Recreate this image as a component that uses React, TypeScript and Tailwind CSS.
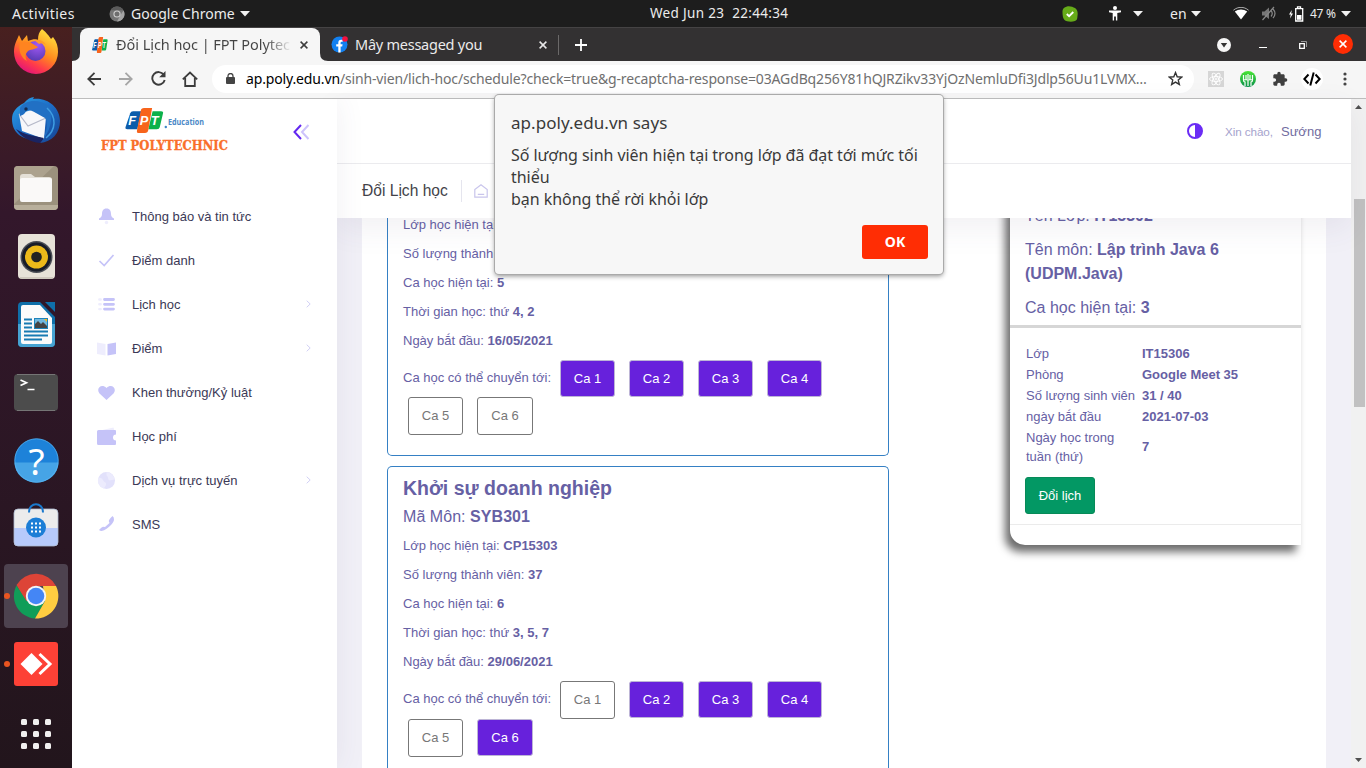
import React from 'react';

const UI = "font-['Noto_Sans','Open_Sans',sans-serif]";

const Caret = ({ className = '' }: { className?: string }) => (
  <svg className={className} width="10" height="6" viewBox="0 0 10 6"><path d="M0 0h10L5 5.500z" fill="#f2f2f2" /></svg>
);

function TopBar() {
  return (
    <header className={`flex h-[27px] shrink-0 items-center bg-[#1d1d1d] text-[14px] text-[#ececec] ${UI}`}>
      <span className="ml-3 w-[97px] whitespace-nowrap tracking-[0.45px]">Activities</span>
      <svg width="16" height="16" viewBox="0 0 16 16">
        <circle cx="8" cy="8" r="7.500" fill="#767676" />
        <path d="M1.500 4.200A7.500 7.500 0 0 1 14.500 4.200H8z" fill="#5b5b5b" />
        <path d="M14.600 4.400A7.500 7.500 0 0 1 8 15.500L11.500 9z" fill="#a4a4a4" />
        <circle cx="8" cy="8" r="3.600" fill="#d0d0d0" /><circle cx="8" cy="8" r="2.500" fill="#6e6e6e" />
      </svg>
      <span className="ml-[6px] w-[109px] whitespace-nowrap tracking-[0.03px]">Google Chrome</span>
      <Caret />
      <span className="ml-[400px] w-[410px] whitespace-pre text-[13.500px] tracking-[0.340px]">Wed Jun 23  22:44:34</span>
      <svg className="ml-[2px]" width="16" height="16" viewBox="0 0 16 16">
        <path d="M5 .4C8-.3 11 1 13 2s3 4 2.600 7 0 5-2.600 6-5 1-8 .3S.8 12 .6 8.500 0 1.500 5 .4z" fill="#66ab19" />
        <path d="M4.800 8l2.300 2.200L11.300 6" fill="none" stroke="#fff" strokeWidth="1.800" />
      </svg>
      <svg className="ml-[31px]" width="12" height="15" viewBox="0 0 12 15">
        <circle cx="6" cy="2" r="2" fill="#fff" />
        <path d="M0 4.500h12v1.700L8.300 7v7.500H6.900V10.500H5.100v4H3.700V7L0 6.200z" fill="#fff" />
      </svg>
      <Caret className="ml-[12px]" />
      <span className="ml-[27px] w-[21px]">en</span>
      <Caret />
      <svg className="ml-[32px]" width="16" height="13" viewBox="0 0 16 13">
        <path d="M.4 3.200C5-.6 11-.6 15.600 3.200" fill="none" stroke="#aaa" strokeWidth="1" />
        <path d="M1.800 4.600C5.500 1.800 10.500 1.800 14.200 4.600L8 12.500z" fill="#fff" />
      </svg>
      <svg className="ml-[12px]" width="16" height="15" viewBox="0 0 16 15" fill="none" stroke="#888">
        <path d="M1 5.500h2.500L8 1.500v11.500L3.500 9.500H1z" fill="#777" stroke="none" />
        <path d="M10 4.500q2.500 3 0 6M12 3q4 4.500 0 9M1.500 14L13 1" strokeWidth="1.200" />
      </svg>
      <svg className="ml-[12px]" width="15" height="16" viewBox="0 0 15 16">
        <path d="M2.800 4L0 8.500h1.800L1 12.500 4 7.500H2.200z" fill="#fff" />
        <path d="M8.500 2.200V.8h3v1.400M6.700 2.700h7v12.300h-7z" fill="none" stroke="#fff" strokeWidth="1.300" />
        <path d="M8 9h4.500v4.800H8z" fill="#fff" />
      </svg>
      <span className="ml-[6px] w-[31px] whitespace-nowrap text-[12px] tracking-[-0.3px]">47 %</span>
      <Caret />
    </header>
  );
}

const dockIcons: React.ReactNode[] = [
  <svg className="relative -top-px" width="46" height="46" viewBox="0 0 46 46">
    <defs>
      <linearGradient id="ff" x1=".8" y1=".1" x2=".3" y2="1"><stop offset="0" stopColor="#ffd93b" /><stop offset=".45" stopColor="#ff8a1e" /><stop offset=".75" stopColor="#ff3a4b" /><stop offset="1" stopColor="#e0127c" /></linearGradient>
      <radialGradient id="fp" cx=".6" cy=".2" r=".8"><stop offset="0" stopColor="#a259f5" /><stop offset="1" stopColor="#5a3bb5" /></radialGradient>
    </defs>
    <path d="M29 1c5 4 7 7 9 10l2-2c4 5 5 10 5 15a22 22 0 0 1-44 0C1 16 4 12 6 7l3 6 5-6 1 6c5-2 8-2 10-1 0-5 1-8 4-11z" fill="url(#ff)" />
    <circle cx="22.500" cy="23" r="10" fill="url(#fp)" />
    <path d="M7 15c6-3 10-1 13 1l5 3c-3 3-8 2-10 4-3 3-3 6-1 10-6-3-9-11-7-18z" fill="#ff8420" />
    <path d="M21 12c6-1 10 1 12 5-3-2-5-2-7-1z" fill="#ff9a2b" />
  </svg>,
  <svg width="48" height="48" viewBox="0 0 48 48">
    <defs><linearGradient id="tb" x1="0" y1="0" x2="1" y2="1"><stop offset="0" stopColor="#2aa4e8" /><stop offset=".5" stopColor="#1d6cc6" /><stop offset="1" stopColor="#16418f" /></linearGradient></defs>
    <path d="M12 7c3-4 7-6 10-6l-1 2c14-2 27 8 27 22 0 12-8 21-20 22l3-4C12 46 0 38 0 23 0 16 4 11 12 7z" fill="url(#tb)" />
    <path d="M7 18l15-5 12 8-2 22L10 35z" fill="#f7f7fa" />
    <path d="M7 18l9 12 18-8" fill="none" stroke="#b6b9c9" strokeWidth="1.200" />
    <path d="M8 12c5-8 18-10 29-2 4 8 3 22-5 32 2-8 5-15 1-20-6-3-12-8-18-8-2 3-3 5-7 6z" fill="#2170c4" />
    <path d="M35 12c10 9 9 22-1 30" stroke="#3f9de2" strokeWidth="1.500" fill="none" />
    <circle cx="14" cy="13" r="1.700" fill="#112c54" />
    <path d="M4 33c9 6 18 7 28 9l-4 5c-10-1-19-6-24-14z" fill="#1a2462" />
  </svg>,
  <svg width="44" height="44" viewBox="0 0 44 44">
    <rect width="44" height="44" rx="4" fill="#9b917d" /><path d="M0 38V4q0-4 4-4h36L0 38z" fill="#aca28e" /><path d="M0 39h44v1q0 4-4 4H4q-4 0-4-4z" fill="#b8af9b" />
    <path d="M6 11q0-3 3-3h8l4 3h14q3 0 3 3v18H6z" fill="#e4e0d7" />
    <rect x="6" y="12" width="32" height="24" rx="2" fill="#faf9f8" />
  </svg>,
  <svg width="37" height="45" viewBox="0 0 37 45">
    <rect width="37" height="45" rx="4" fill="#e7e2d8" /><path d="M2 44h33" stroke="#b8b1a4" />
    <circle cx="18.500" cy="23" r="16" fill="#4a4d55" /><circle cx="18.500" cy="23" r="14.500" fill="#181c28" /><circle cx="18.500" cy="23" r="11.500" fill="#ecb91a" />
    <circle cx="18.500" cy="23" r="5.300" fill="#222" />
  </svg>,
  <svg width="37" height="45" viewBox="0 0 37 45">
    <path d="M4 0h18l15 15v26q0 4-4 4H4q-4 0-4-4V4q0-4 4-4z" fill="#0f6fa9" /><path d="M0 22h37v19q0 4-4 4H4q-4 0-4-4z" fill="#46a3d2" />
    <path d="M27 0h10v10z" fill="#0f6fa9" />
    <path d="M5 3h17l12 13v24q0 2-2 2H5q-2 0-2-2V5q0-2 2-2z" fill="#fbfbfb" />
    <path d="M6 17.500h8M6 21.500h8M6 25.500h8M6 29.500h24M6 33.500h24M6 37.500h18" stroke="#187bb3" strokeWidth="2" />
    <path d="M16 16h14v11H16z" fill="#1d83ba" /><path d="M17 17h12v9H17z" fill="#70b7de" /><path d="M17 26v-4l3-3 3 3 2-2 4 4v2z" fill="#444" /><path d="M26 17h3v3z" fill="#f2b91f" />
  </svg>,
  <svg width="44" height="37" viewBox="0 0 44 37">
    <rect width="44" height="37" rx="4" fill="#4c4c4c" /><path d="M3 36.500h38M3 .5h38" stroke="#757575" />
    <path d="M6.500 6l6 2.800-6 2.800M13.500 15.500h7" fill="none" stroke="#fff" strokeWidth="1.700" />
  </svg>,
  <svg width="45" height="45" viewBox="0 0 45 45">
    <circle cx="22.500" cy="22.500" r="22" fill="#1d82d9" /><path d="M.5 24.500a22 20 0 0 0 44 0z" fill="#46a4e6" />
    <circle cx="22.500" cy="22.500" r="21.700" fill="none" stroke="#5cb6f0" strokeWidth=".7" />
    <text x="22.500" y="36.500" textAnchor="middle" fontFamily="Noto Sans" fontSize="37" fill="#fff">?</text>
  </svg>,
  <svg className="relative -top-[3px]" width="46" height="44" viewBox="0 0 46 44">
    <rect x="1" y="6" width="44" height="37" rx="4" fill="#ececec" /><path d="M1 25h44v14q0 4-4 4H5q-4 0-4-4z" fill="#b7cafb" />
    <rect x="1" y="6" width="44" height="37" rx="4" fill="none" stroke="#aebbd2" strokeWidth=".8" />
    <path d="M16 9.500C16-1.500 30-1.500 30 9.500" fill="none" stroke="#1a79cd" strokeWidth="2" />
    <circle cx="23" cy="24.500" r="10" fill="#1c7ed6" />
    <path d="M18 20.500h10M18 24.500h10M18 28.500h10" stroke="#fff" strokeWidth="2" strokeDasharray="2 2" />
  </svg>,
  <svg width="46" height="46" viewBox="0 0 46 46">
    <path d="M3.500 12A22.500 22.500 0 0 1 43 13H23L13 29z" fill="#dd4437" />
    <path d="M3.500 12.500A22.500 22.500 0 0 0 22 45.500L32 28 13.500 28z" fill="#109d58" />
    <path d="M43 13A22.500 22.500 0 0 1 22 45.500L32 28 30 13z" fill="#ffcd41" />
    <circle cx="23" cy="23" r="10.200" fill="#f4f4f4" /><circle cx="23" cy="23" r="8.300" fill="#4486f5" />
  </svg>,
  <svg width="44" height="44" viewBox="0 0 44 44">
    <rect width="44" height="44" rx="3" fill="#fd4136" />
    <path d="M6.500 22L17.500 11l11 11-11 11z" fill="#fff" /><path d="M25.500 12L36 22 25.500 32" fill="none" stroke="#fff" strokeWidth="3" />
  </svg>,
  <svg className="relative top-[2px]" width="30" height="30" viewBox="0 0 30 30" fill="#f1f0ef">
    {[0, 12, 24].map((y) => [0, 12, 24].map((x) => <rect key={`${x}-${y}`} x={x} y={y} width="6" height="6" rx="1.500" />))}
  </svg>,
];

function Dock() {
  return (
    <nav className="w-[72px] shrink-0 overflow-hidden bg-linear-to-b from-[#48201f] via-[#33172b] via-25% to-[#22151c]">
      <div className="-mt-[9px] flex flex-col">
        {dockIcons.map((icon, i) => (
          <div key={i} className="relative flex h-[68px] items-center justify-center">
            {i === 8 && <span className="absolute inset-x-1 inset-y-[2px] rounded bg-[#4d424f]" />}
            {(i === 8 || i === 9) && <span className="absolute left-1 size-[6px] rounded-full bg-[#e95420]" />}
            <span className="relative">{icon}</span>
          </div>
        ))}
      </div>
    </nav>
  );
}

const FptMark = ({ w, h }: { w: number; h: number }) => (
  <svg width={w} height={h} viewBox="0 0 41 26" preserveAspectRatio="none" className="shrink-0">
    <path d="M5.500 5.500q.7-2 3-2H17L13 22H2.500Q0 22 .5 20z" fill="#0b5cab" />
    <path d="M29 3.500h9q2.500 0 2 2l-3.500 14.500q-.5 2-3 2H24.500z" fill="#0cb14b" />
    <path d="M16.500 3q.5-3 3.500-3h8.500l-4 23q-.5 3-3.500 3h-7q-2 0-1.500-2z" fill="#f7641c" />
    <g fill="#fff" fontFamily="Liberation Sans" fontWeight="bold" fontStyle="italic" fontSize="13.500">
      <text x="3.500" y="18">F</text><text x="15.500" y="18">P</text><text x="27" y="18">T</text>
    </g>
  </svg>
);

const CloseX = ({ color }: { color: string }) => (
  <svg width="8" height="8" viewBox="0 0 8 8"><path d="M.6.6l6.800 6.800M7.400.6L.6 7.400" stroke={color} strokeWidth="1.500" /></svg>
);

function TabStrip() {
  return (
    <div className={`flex h-[34px] shrink-0 items-center border-t border-[#454344] bg-[#333132] text-[14.500px] ${UI}`}>
      <svg className="self-end" width="8" height="8" viewBox="0 0 8 8"><path d="M8 0v8H0Q8 8 8 0z" fill="#f6f6f6" /></svg>
      <div className="flex h-full w-[240px] items-center rounded-t-lg bg-[#f6f6f6]">
        <span className="ml-3"><FptMark w={16} h={16} /></span>
        <span className="ml-2 w-[176px] overflow-hidden bg-linear-to-r from-[#444] from-85% to-transparent bg-clip-text tracking-[-0.05px] whitespace-nowrap text-transparent">Đổi Lịch học | FPT Polytec</span>
        <span className="ml-2"><CloseX color="#3c3c3c" /></span>
      </div>
      <svg className="self-end" width="8" height="8" viewBox="0 0 8 8"><path d="M0 0v8h8Q0 8 0 0z" fill="#f6f6f6" /></svg>
      <svg className="ml-[3px]" width="17" height="17" viewBox="0 0 17 17">
        <circle cx="8.500" cy="8.500" r="8" fill="#1280f0" />
        <path d="M7.300 16.500V10.500H5.200V8.200h2.100V6.700q0-3 2.800-3h1.600v2.100h-1q-1.100 0-1.100 1v1.400h2l-.4 2.300H9.600v6z" fill="#fff" />
        <circle cx="14" cy="3" r="2.800" fill="#f5113f" />
      </svg>
      <span className="ml-[7px] w-[184px] tracking-[-0.25px] whitespace-nowrap text-[#ebebeb]">Mây messaged you</span>
      <CloseX color="#e8e8e8" />
      <span className="ml-[11px] h-5 w-px bg-[#6b6969]" />
      <svg className="ml-4" width="12" height="12" viewBox="0 0 12 12"><path d="M6 0v12M0 6h12" stroke="#fff" strokeWidth="1.800" /></svg>
      <svg className="ml-[630px]" width="14" height="14" viewBox="0 0 14 14"><circle cx="7" cy="7" r="7" fill="#f6f6f6" /><path d="M3.800 5h6.400L7 9.500z" fill="#333" /></svg>
      <span className="mt-[5px] ml-7 h-px w-2 bg-white" />
      <svg className="ml-8" width="8" height="8" viewBox="0 0 8 8" fill="none"><path d="M2 .5h5.500V6" stroke="#999" /><path d="M.7 2.700h4.600v4.600H.7z" stroke="#fff" strokeWidth="1.300" /></svg>
      <span className="-mt-px ml-[26px] flex size-5 items-center justify-center rounded-full bg-[#ff2d04]"><CloseX color="#fff" /></span>
    </div>
  );
}

function Toolbar() {
  return (
    <div className={`flex h-[38px] shrink-0 items-center border-b border-[#bdbdbd] bg-[#f6f6f6] pb-[2px] ${UI}`}>
      <svg className="ml-[15px]" width="14" height="14" viewBox="0 0 14 14" fill="none" stroke="#3c3c3c" strokeWidth="1.800"><path d="M14 7H1.500M7.500.8L1.300 7l6.200 6.200" /></svg>
      <svg className="ml-[18px]" width="14" height="14" viewBox="0 0 14 14" fill="none" stroke="#a6a6a6" strokeWidth="1.800"><path d="M0 7h12.500M6.500.8L12.700 7l-6.200 6.200" /></svg>
      <svg className="ml-[18px]" width="15" height="15" viewBox="0 0 15 15" fill="none" stroke="#3c3c3c" strokeWidth="1.900"><path d="M12.800 3.800A6.300 6.300 0 1 0 13.700 9" /><path d="M14.500 0v6.300H8.200z" fill="#3c3c3c" stroke="none" /></svg>
      <svg className="ml-4" width="16" height="16" viewBox="0 0 16 16" fill="none" stroke="#3c3c3c" strokeWidth="1.800"><path d="M.8 8.300L8 1.500l7.200 6.800M3.200 7v8h9.600V7" /></svg>
      <div className="ml-[14px] flex h-7 w-[982px] items-center rounded-full bg-white">
        <svg className="ml-[14px]" width="9" height="11" viewBox="0 0 9 11"><rect y="4" width="9" height="7" rx="1" fill="#444" /><path d="M2 4.500V3a2.500 2.500 0 0 1 5 0v1.500" fill="none" stroke="#444" strokeWidth="1.300" /></svg>
        <p className="ml-[11px] w-[905px] text-[14px] tracking-[-0.145px] whitespace-nowrap text-[#6f6f6f]">
          <span className="text-black">ap.poly.edu.vn</span>/sinh-vien/lich-hoc/schedule?check=true&amp;g-recaptcha-response=03AGdBq256Y81hQJRZikv33YjOzNemluDfi3Jdlp56Uu1LVMX…
        </p>
        <svg className="ml-[17px]" width="15" height="15" viewBox="0 0 24 24" fill="none" stroke="#333" strokeWidth="2.200"><path d="M12 2.500l2.700 6.700 7.300.6-5.600 4.700 1.800 7L12 17.700l-6.200 3.800 1.800-7L2 9.800l7.300-.6z" /></svg>
      </div>
      <svg className="ml-[14px]" width="16" height="16" viewBox="0 0 16 16" fill="none" stroke="#fff" strokeWidth=".9"><path d="M0 0h16v16H0z" fill="#d6d6d6" stroke="none" /><ellipse cx="8" cy="8" rx="6.500" ry="2.500" /><ellipse cx="8" cy="8" rx="6.500" ry="2.500" transform="rotate(60 8 8)" /><ellipse cx="8" cy="8" rx="6.500" ry="2.500" transform="rotate(120 8 8)" /><circle cx="8" cy="8" r="1" /></svg>
      <svg className="ml-4" width="16" height="16" viewBox="0 0 16 16"><defs><linearGradient id="gl" x2="0" y2="1"><stop stopColor="#49e635" /><stop offset="1" stopColor="#0a8f4b" /></linearGradient></defs><circle cx="8" cy="8" r="8" fill="url(#gl)" /><path d="M3.500 4v5q0 2 1.500 2v4M8 3v5M12.500 4v5q0 2-1.500 2v4M6 4v5M10 4v5M8 9v6" stroke="#fff" strokeWidth="1.200" fill="none" /><path d="M3 8.800h10" stroke="#fff" /></svg>
      <svg className="ml-4" width="16" height="16" viewBox="0 0 24 24" fill="#3f3f3f"><path d="M20.500 11H19V7c0-1.100-.9-2-2-2h-4V3.500a2.500 2.500 0 0 0-5 0V5H4c-1.100 0-2 .9-2 2v3.800h1.500a2.700 2.700 0 0 1 0 5.400H2V20c0 1.100.9 2 2 2h3.800v-1.500a2.700 2.700 0 0 1 5.400 0V22H17c1.100 0 2-.9 2-2v-4h1.500a2.500 2.500 0 0 0 0-5z" /></svg>
      <span className="ml-[13px] flex size-[22px] items-center justify-center rounded-full bg-white">
        <svg width="18" height="14" viewBox="0 0 18 14" fill="none" stroke="#000" strokeWidth="2"><path d="M5.500 2.500L1.300 7l4.200 4.500M12.500 2.500L16.700 7l-4.200 4.500M10.700.5L7.300 13.500" /></svg>
      </span>
      <svg className="ml-5" width="4" height="14" viewBox="0 0 4 14" fill="#444"><circle cx="2" cy="2" r="1.600" /><circle cx="2" cy="7" r="1.600" /><circle cx="2" cy="12" r="1.600" /></svg>
    </div>
  );
}

const C = '#c5c3f8';
const L = '#eeedfd';
const menu: { label: string; more?: boolean; icon: React.ReactNode }[] = [
  { label: 'Thông báo và tin tức', icon: <><path d="M10 1.500c3.500 0 4.500 2.500 4.500 5.500 0 2.500 1 3.500 3 4.500V13h-15v-1.500c2-1 3-2 3-4.500 0-3 1-5.500 4.500-5.500z" fill={C} /><circle cx="10" cy="15.500" r="1.700" fill={L} /></> },
  { label: 'Điểm danh', icon: <path d="M3 10l4.700 4.500L17 4" fill="none" stroke={C} strokeWidth="1.700" /> },
  { label: 'Lịch học', more: true, icon: <><path d="M8 4.500h9M8 9.300h9M8 14.100h9" stroke={C} strokeWidth="2.800" strokeLinecap="round" /><path d="M2.800 4.500h1.400M2.800 9.300h1.400M2.800 14.100h1.400" stroke={L} strokeWidth="2.400" strokeLinecap="round" /></> },
  { label: 'Điểm', more: true, icon: <><path d="M.5 3.500L9 5v11.500L.5 15z" fill={L} /><path d="M11 5l8.500-1.500V15L11 16.500z" fill={C} /></> },
  { label: 'Khen thưởng/Kỷ luật', icon: <path d="M10 17L3 10.500C-1 5.500 5 0 10 5 15 0 21 5.500 17 10.500z" fill={C} /> },
  { label: 'Học phí', icon: <><path d="M6 3l11-2.500L18 4z" fill={L} /><path d="M2 3h16.500q1 0 1 1v3.500a2.900 2.900 0 0 0 0 6V17q0 1-1 1H2Q.5 18 .5 16.500v-12Q.5 3 2 3z" fill={C} /></> },
  { label: 'Dịch vụ trực tuyến', more: true, icon: <><circle cx="10" cy="9.500" r="8.500" fill="#e2e1fb" /><path d="M2 6.500c5 0 4 4 7 5 2 2-1 5-2 6A8.500 8.500 0 0 1 2 6.500zM10 4.500c2 1 1 4 3 5l5-1A8.500 8.500 0 0 0 10 1z" fill="#ecebfd" /></> },
  { label: 'SMS', icon: <path d="M2.500 15q3 2.500 8-1.500 6.500-5 7-8.500.2-3-1.500-4-4 4-3.700 5.200l.7 1.800-4.500 4-2-.3Q5 12 2.500 15z" fill={C} /> },
];

function Sidebar() {
  return (
    <aside className="relative z-20 flex w-[265px] shrink-0 flex-col bg-white shadow-[0_0_28px_0_rgba(82,63,105,0.08)] [clip-path:inset(0_-40px_0_0)]">
      <div className="flex h-[96px] pl-[29px]">
        <div className="w-[128px] pt-[9px]">
          <div className="flex items-center pl-6">
            <FptMark w={39} h={25} />
            <svg width="42" height="16" viewBox="0 0 42 16">
              <circle cx="1.800" cy="14" r="1.200" fill="#3f86c8" />
              <text x="4" y="12" textLength="36" lengthAdjust="spacingAndGlyphs" fontFamily="Open Sans" fontWeight="bold" fontSize="9.500" fill="#4a87c6">Education</text>
            </svg>
          </div>
          <svg width="140" height="20" viewBox="0 0 140 20" className="mt-[2px]">
            <text x="0" y="15" textLength="127" lengthAdjust="spacingAndGlyphs" fontFamily="DejaVu Serif" fontWeight="bold" fontSize="12" stroke="#f96f2a" strokeWidth=".3" fill="#f96f2a">FPT POLYTECHNIC</text>
          </svg>
        </div>
        <svg className="mt-[25px] ml-[64px]" width="17" height="16" viewBox="0 0 17 16" fill="none" strokeWidth="2"><path d="M8 1L1.500 8 8 15" stroke="#6327f0" /><path d="M15.500 1L9 8l6.500 7" stroke="#cdc3fb" /></svg>
      </div>
      <ul>
        {menu.map((m) => (
          <li key={m.label} className="flex h-11 items-center pl-6">
            <svg width="21" height="20" viewBox="0 0 20 20">{m.icon}</svg>
            <span className="ml-[15px] flex-1 text-[13px] text-[#3b3956]">{m.label}</span>
            {m.more && <svg className="mr-[26px] -mt-[2px]" width="5" height="8" viewBox="0 0 5 8"><path d="M.7.7L4.200 4 .7 7.300" fill="none" stroke="#d2d0f5" /></svg>}
          </li>
        ))}
      </ul>
    </aside>
  );
}

function PageHeader() {
  return (
    <div className="relative z-10 bg-white shadow-[0_10px_30px_0_rgba(82,63,105,0.08)]">
      <div className="flex h-[65px] items-center border-b border-[#ebebee]">
        <svg className="ml-[850px]" width="16" height="16" viewBox="0 0 16 16"><circle cx="8" cy="8" r="7" fill="none" stroke="#6b2cf5" strokeWidth="2" /><path d="M8 1a7 7 0 0 1 0 14z" fill="#6b2cf5" /></svg>
        <span className="mt-[2px] ml-[22px] w-14 text-[11.700px] tracking-[-0.1px] whitespace-nowrap text-[#a5a3cd]">Xin chào,</span>
        <span className="mt-[2px] text-[13px] text-[#716ca0]">Sướng</span>
      </div>
      <div className="flex h-[54px] items-center pl-[25px]">
        <h1 className="w-[99px] text-[15.600px] whitespace-nowrap text-[#434349]">Đổi Lịch học</h1>
        <span className="h-[22px] w-px bg-[#e5e5ee]" />
        <svg className="ml-3" width="14" height="14" viewBox="0 0 14 14" fill="none" stroke="#c9c5ec" strokeWidth="1.200"><path d="M.8 5.500L7 .8l6.200 4.700v7.700H.8zM3.800 10.300h6.400" /></svg>
      </div>
    </div>
  );
}

const Line = ({ label, value }: { label: string; value: string }) => (
  <p className="flex h-[29px] items-center text-[13px] whitespace-pre">{label} <b>{value}</b></p>
);

const Slot = ({ n, on }: { n: number; on: boolean }) => {
  const width = n === 6 ? 'w-[56px]' : 'w-[55px]';
  return (
    <button className={on
      ? `mr-[14px] h-[37px] ${width} rounded-[3px] border border-[#bdb5d6] bg-[#6721dc] text-[13px] text-white`
      : `mr-[14px] h-[38px] ${width} rounded-[3px] border border-[#777] bg-white text-[13px] text-[#777]`}>Ca {n}</button>
  );
};

const Slots = ({ open }: { open: number[] }) => (
  <div className="text-[13px]">
    <div className={open.includes(1) ? 'flex h-[37px] items-start' : 'flex h-[38px] items-start'}>
      <span className="mt-[8px] w-[157px]">Ca học có thể chuyển tới:</span>
      {[1, 2, 3, 4].map((n) => <Slot key={n} n={n} on={open.includes(n)} />)}
    </div>
    <div className="flex h-[38px] items-start pl-[5px]">
      {[5, 6].map((n) => <Slot key={n} n={n} on={open.includes(n)} />)}
    </div>
  </div>
);

function ChangeCard() {
  return (
    <section className="-mt-[20px] h-[347px] w-[291px] rounded-bl-[15px] bg-white shadow-[-5px_7px_9px_#6c6c6c]">
      <div className="h-[130px] border-b-[3px] border-[#d6d6d6] px-[15px] text-[16px] leading-6">
        <p className="pt-[6px] whitespace-nowrap">Tên Lớp: <b>IT15302</b></p>
        <p className="mt-[10px]">Tên môn: <b>Lập trình Java 6 (UDPM.Java)</b></p>
        <p className="mt-[10px]">Ca học hiện tại: <b>3</b></p>
      </div>
      <div className="grid grid-cols-[116px_1fr] items-center gap-y-[2px] px-4 pt-[16px] text-[13px] leading-[19px] whitespace-nowrap">
        <span>Lớp</span><b>IT15306</b>
        <span>Phòng</span><b>Google Meet 35</b>
        <span>Số lượng sinh viên</span><b>31 / 40</b>
        <span>ngày bắt đầu</span><b>2021-07-03</b>
        <span>Ngày học trong<br />tuần (thứ)</span><b className="pb-[2px]">7</b>
      </div>
      <button className="mt-[11px] ml-[15px] h-[37px] w-[70px] rounded-[3px] border border-[#078a58] bg-[#039864] text-[13px] text-white">Đổi lịch</button>
      <div className="mt-[10px] border-t border-[#ebebeb]" />
    </section>
  );
}

function Page() {
  return (
    <main className="flex w-[1014px] shrink-0 flex-col bg-[#f1f0f7]">
      <PageHeader />
      <div className="h-[550px] overflow-hidden px-[25px]">
        <div className="flex h-full justify-between bg-white pr-[25px] pl-[25px] text-[#6660a4]">
          <div className="w-[502px]">
            <section className="-mt-2 h-[246px] rounded-b-[5px] border-x border-b border-[#3580c4] pl-[15px]">
              <Line label="Lớp học hiện tại:" value="IT15301" />
              <Line label="Số lượng thành viên:" value="31" />
              <Line label="Ca học hiện tại:" value="5" />
              <Line label="Thời gian học: thứ" value="4, 2" />
              <Line label="Ngày bắt đầu:" value="16/05/2021" />
              <div className="mt-[5px]"><Slots open={[1, 2, 3, 4]} /></div>
            </section>
            <section className="mt-[10px] h-[330px] rounded-t-[5px] border-x border-t border-[#3580c4] pl-[15px]">
              <h2 className="mt-[6px] text-[19.500px] leading-[30px] font-bold">Khởi sự doanh nghiệp</h2>
              <p className="mt-px mb-[2px] text-[16px] leading-[25px] tracking-[0.05px]">Mã Môn: <b>SYB301</b></p>
              <Line label="Lớp học hiện tại:" value="CP15303" />
              <Line label="Số lượng thành viên:" value="37" />
              <Line label="Ca học hiện tại:" value="6" />
              <Line label="Thời gian học: thứ" value="3, 5, 7" />
              <Line label="Ngày bắt đầu:" value="29/06/2021" />
              <div className="mt-[5px]"><Slots open={[2, 3, 4, 6]} /></div>
            </section>
          </div>
          <ChangeCard />
        </div>
      </div>
    </main>
  );
}

function Scrollbar() {
  return (
    <div className="flex w-[15px] flex-col items-center bg-[#f1f1f1]">
      <svg className="mt-[6px]" width="7" height="4" viewBox="0 0 7 4"><path d="M0 4L3.500 0 7 4z" fill="#505050" /></svg>
      <span className="mt-[90px] ml-px h-[208px] w-[11px] bg-[#c1c1c1]" />
      <svg className="mt-auto mb-[6px]" width="7" height="4" viewBox="0 0 7 4"><path d="M0 0h7L3.500 4z" fill="#505050" /></svg>
    </div>
  );
}

function AlertDialog() {
  return (
    <div className={`absolute top-[95px] left-[495px] z-30 flex h-[179px] w-[448px] flex-col rounded-[4px] bg-[#f7f7f7] px-4 pt-[16px] text-[#3a3a3a] shadow-[0_0_0_1px_#aaa,0_2px_5px_rgba(0,0,0,0.45)] ${UI}`}>
      <h3 className="text-[17px] leading-6 tracking-[0.05px]">ap.poly.edu.vn says</h3>
      <p className="mt-[9px] text-[16px] leading-[22px] tracking-[-0.040px] whitespace-nowrap">
        Số lượng sinh viên hiện tại trong lớp đã đạt tới mức tối<br />thiểu<br />bạn không thể rời khỏi lớp
      </p>
      <button className="mt-[15px] mr-[-1px] h-[34px] w-[66px] self-end rounded-[3px] bg-[#ff2d04] pb-[2px] text-[14px] font-bold text-white">OK</button>
    </div>
  );
}

export default function App() {
  return (
    <div className="relative flex h-[768px] w-[1366px] flex-col overflow-hidden bg-white font-['Liberation_Sans',Arial,sans-serif]">
      <TopBar />
      <div className="flex h-[741px]">
        <Dock />
        <div className="flex w-[1294px] flex-col">
          <TabStrip />
          <Toolbar />
          <div className="flex min-h-0 flex-1">
            <Sidebar />
            <Page />
            <Scrollbar />
          </div>
        </div>
      </div>
      <AlertDialog />
    </div>
  );
}
